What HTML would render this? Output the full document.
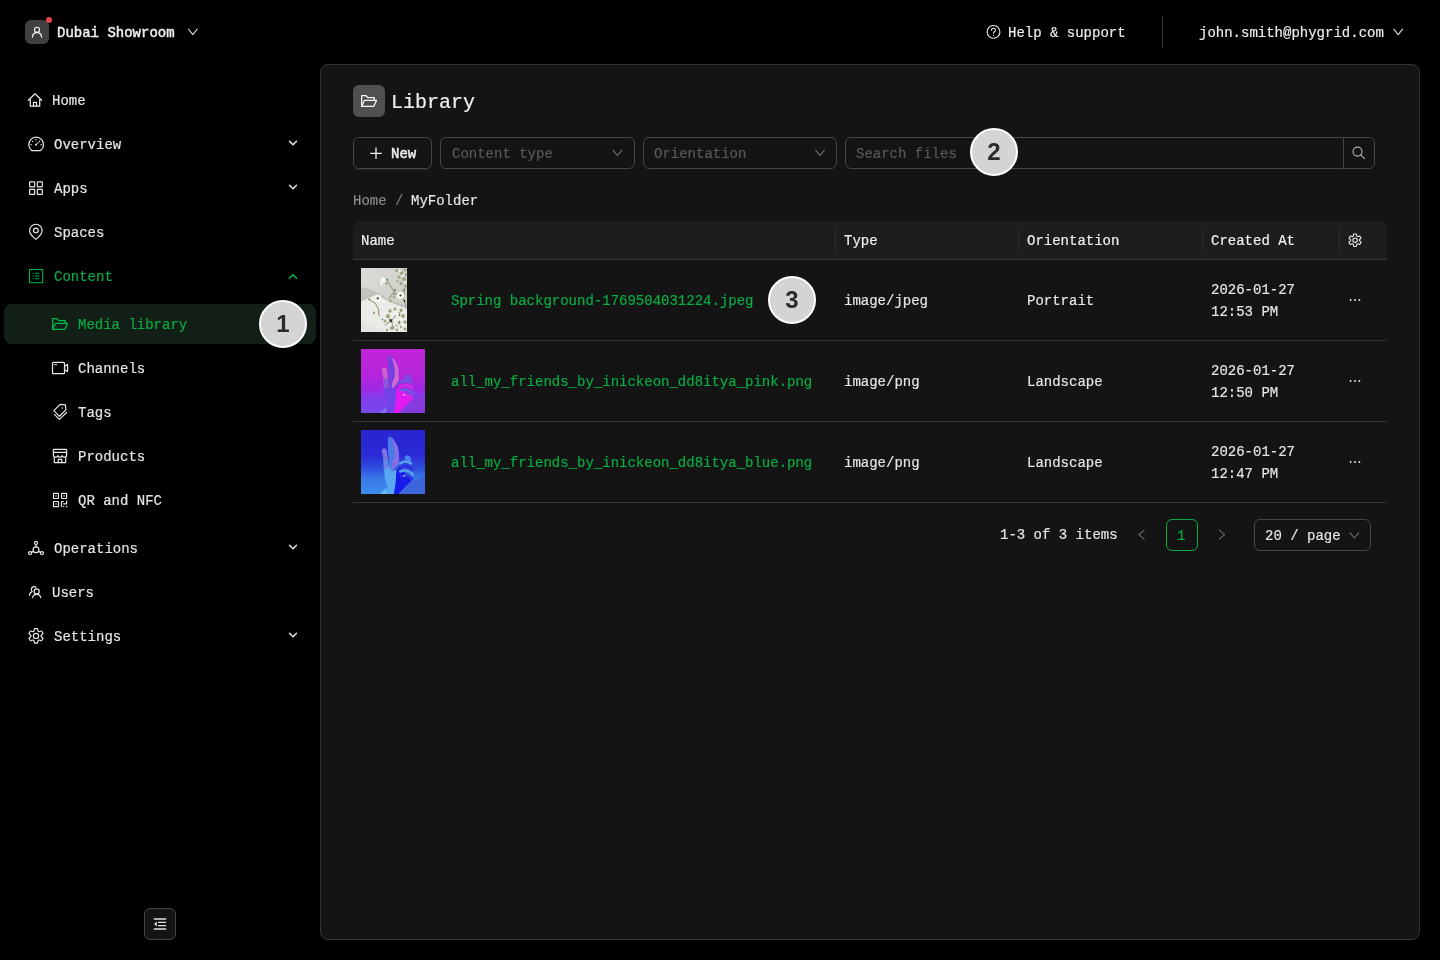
<!DOCTYPE html>
<html lang="en">
<head>
<meta charset="utf-8">
<title>Library</title>
<style>
*{box-sizing:border-box;margin:0;padding:0}
html,body{width:1440px;height:960px;overflow:hidden;background:#000}
body{position:relative;font-family:"Liberation Mono","DejaVu Sans Mono",monospace;font-size:14px;color:#e6e6e6;line-height:22px}
#root{position:absolute;left:0;top:0;width:1440px;height:960px;will-change:transform}
.abs{position:absolute}
.t.med{-webkit-text-stroke:0.45px currentColor}
svg{display:block;overflow:visible}
.t{position:absolute;white-space:nowrap;height:24px;line-height:24px;-webkit-text-stroke:0.18px currentColor}
/* header */
#org-av{left:25px;top:20px;width:24px;height:24px;border-radius:6px;background:#404040}
#org-dot{left:46.2px;top:16.9px;width:6.2px;height:6.2px;border-radius:50%;background:#e5484d}
/* sidebar */
.mi{position:absolute;left:4px;width:312px;height:40px}
.mi .ic{position:absolute;left:24px;top:12px;width:16px;height:16px;color:#e6e6e6}
.mi .lb{position:absolute;top:9px;height:24px;line-height:24px;white-space:nowrap;-webkit-text-stroke:0.18px currentColor}
.mi .ch{position:absolute;left:284px;top:15px;width:10px;height:10px}
.mi.sub .ic{left:48px}
.mi.sub .lb{left:74px}
.mi.sel{background:#111f17;border-radius:8px;color:#08ad43}
.mi.green{color:#08ad43}
.mi.green .ic,.mi.sel .ic{color:#08ad43}
/* main */
#panel{left:320px;top:64px;width:1100px;height:876px;background:#141414;border:1px solid #343434;border-radius:8px}
.badge{position:absolute;width:48px;height:48px;line-height:44px;font-size:24px;border-radius:50%;background:#d4d4d4;border:2px solid #fff;color:#2b2b2b;font-family:"Liberation Sans",sans-serif;font-weight:bold;text-align:center}
.inp{position:absolute;height:32px;top:137px;border:1px solid #464646;border-radius:6px;background:#141414}
.ph{color:#5a5a5a}
.hdr{position:absolute;left:353px;top:221px;width:1034px;height:39px;background:#1d1d1d;border-radius:8px 8px 0 0;border-bottom:1px solid #363636}
.sep{position:absolute;top:229px;width:1px;height:22px;background:#2e2e2e}
.row{position:absolute;left:353px;width:1034px;height:81px;border-bottom:1px solid #363636}
.g{color:#08ad43}
</style>
</head>
<body>
<div id="root">
<!-- HEADER -->
<div class="abs" id="org-av"></div>
<div class="abs" id="org-dot"></div>
<div class="t med" style="left:57px;top:21px;color:#f0f0f0">Dubai Showroom</div>
<div class="t" style="left:1008px;top:21px;color:#ededed">Help &amp; support</div>
<div class="abs" style="left:1162px;top:16px;width:1px;height:32px;background:#353535"></div>
<div class="t" style="left:1199px;top:21px;color:#ededed">john.smith@phygrid.com</div>

<!-- SIDEBAR -->
<div class="mi" style="top:80px"><div class="lb" style="left:48px">Home</div></div>
<div class="mi" style="top:124px"><div class="lb" style="left:50px">Overview</div></div>
<div class="mi" style="top:168px"><div class="lb" style="left:50px">Apps</div></div>
<div class="mi" style="top:212px"><div class="lb" style="left:50px">Spaces</div></div>
<div class="mi green" style="top:256px"><div class="lb" style="left:50px">Content</div></div>
<div class="mi sub sel" style="top:304px"><div class="lb">Media library</div></div>
<div class="mi sub" style="top:348px"><div class="lb">Channels</div></div>
<div class="mi sub" style="top:392px"><div class="lb">Tags</div></div>
<div class="mi sub" style="top:436px"><div class="lb">Products</div></div>
<div class="mi sub" style="top:480px"><div class="lb">QR and NFC</div></div>
<div class="mi" style="top:528px"><div class="lb" style="left:50px">Operations</div></div>
<div class="mi" style="top:572px"><div class="lb" style="left:48px">Users</div></div>
<div class="mi" style="top:616px"><div class="lb" style="left:50px">Settings</div></div>

<!-- MAIN PANEL -->
<div class="abs" id="panel"></div>
<div class="abs" style="left:353px;top:85px;width:32px;height:32px;border-radius:6px;background:#505050"></div>
<div class="t" style="left:391px;top:89px;font-size:20px;height:28px;line-height:28px;color:#f0f0f0">Library</div>

<div class="inp" style="left:353px;width:79px;box-shadow:0 2px 0 rgba(255,255,255,.04)"></div>
<div class="t med" style="left:391px;top:142px;color:#f0f0f0">New</div>
<div class="inp" style="left:440px;width:194.5px"></div>
<div class="t ph" style="left:452px;top:142px">Content type</div>
<div class="inp" style="left:642.5px;width:194.5px"></div>
<div class="t ph" style="left:654px;top:142px">Orientation</div>
<div class="inp" style="left:845px;width:499px;border-radius:6px 0 0 6px"></div>
<div class="inp" style="left:1343px;width:32px;border-radius:0 6px 6px 0"></div>
<div class="t ph" style="left:856px;top:142px">Search files</div>

<div class="t" style="left:353px;top:189px;color:#8c8c8c">Home</div>
<div class="t" style="left:395px;top:189px;color:#7a7a7a">/</div>
<div class="t" style="left:411px;top:189px;color:#e6e6e6">MyFolder</div>

<div class="hdr"></div>
<div class="t" style="left:361px;top:229px;color:#f0f0f0">Name</div>
<div class="t" style="left:844px;top:229px;color:#f0f0f0">Type</div>
<div class="t" style="left:1027px;top:229px;color:#f0f0f0">Orientation</div>
<div class="t" style="left:1211px;top:229px;color:#f0f0f0">Created At</div>
<div class="sep" style="left:835px"></div>
<div class="sep" style="left:1018px"></div>
<div class="sep" style="left:1202px"></div>
<div class="sep" style="left:1339px"></div>

<div class="row" style="top:260px"></div>
<div class="row" style="top:341px"></div>
<div class="row" style="top:422px"></div>

<div class="t g" style="left:451px;top:289px">Spring background-1769504031224.jpeg</div>
<div class="t g" style="left:451px;top:370px">all_my_friends_by_inickeon_dd8itya_pink.png</div>
<div class="t g" style="left:451px;top:451px">all_my_friends_by_inickeon_dd8itya_blue.png</div>

<div class="t" style="left:844px;top:289px">image/jpeg</div>
<div class="t" style="left:844px;top:370px">image/png</div>
<div class="t" style="left:844px;top:451px">image/png</div>
<div class="t" style="left:1027px;top:289px">Portrait</div>
<div class="t" style="left:1027px;top:370px">Landscape</div>
<div class="t" style="left:1027px;top:451px">Landscape</div>
<div class="t" style="left:1211px;top:278px">2026-01-27</div>
<div class="t" style="left:1211px;top:300px">12:53 PM</div>
<div class="t" style="left:1211px;top:359px">2026-01-27</div>
<div class="t" style="left:1211px;top:381px">12:50 PM</div>
<div class="t" style="left:1211px;top:440px">2026-01-27</div>
<div class="t" style="left:1211px;top:462px">12:47 PM</div>

<div class="t" style="left:1000px;top:523px">1-3 of 3 items</div>
<div class="abs" style="left:1165.5px;top:519px;width:32px;height:32px;border:1px solid #08ad43;border-radius:6px"></div>
<div class="t g" style="left:1177px;top:524px">1</div>
<div class="abs" style="left:1253.5px;top:519px;width:117.5px;height:32px;border:1px solid #464646;border-radius:6px"></div>
<div class="t" style="left:1265px;top:524px">20 / page</div>

<!-- collapse btn -->
<div class="abs" style="left:144px;top:908px;width:32px;height:32px;border:1px solid #464646;border-radius:6px;background:#141414"></div>


<!-- THUMBNAILS -->
<svg class="abs" style="left:361px;top:268px" width="46" height="64" viewBox="0 0 46 64">
  <defs><linearGradient id="t1g" x1="0" y1="0" x2="1" y2="1"><stop offset="0" stop-color="#dbdbd7"/><stop offset="1" stop-color="#c9cac5"/></linearGradient></defs>
  <rect width="46" height="64" fill="url(#t1g)"/>
  <path d="M0 19 Q16 22 28 32 L46 38 V44 L0 36 Z" fill="#c1c2bd"/>
  <path d="M0 33.5 L14.5 27 L30 34.5 L46 41 V64 H0 Z" fill="#ebebe8"/>
  <path d="M0 52 L26 64 H0 Z" fill="#e4e4e1"/>
  <g fill="#9a9e70" opacity=".9">
    <circle cx="35.5" cy="2.5" r="1.4"/><circle cx="40.5" cy="5" r="1.8"/><circle cx="44" cy="2" r="1.4"/><circle cx="38" cy="9" r="1.5"/><circle cx="43" cy="11" r="2"/><circle cx="40" cy="15.5" r="1.5"/><circle cx="44.5" cy="18" r="1.5"/><circle cx="36.5" cy="13" r="1.1"/><circle cx="45" cy="7" r="1.3"/><circle cx="42.5" cy="22" r="1.3"/>
    <circle cx="29" cy="43" r="1.7"/><circle cx="34" cy="41" r="1.4"/><circle cx="40" cy="42" r="1.5"/><circle cx="27" cy="48" r="1.9"/><circle cx="24" cy="53" r="1.5"/><circle cx="42" cy="48" r="1.9"/><circle cx="44" cy="54" r="1.7"/><circle cx="38" cy="55" r="1.5"/><circle cx="31" cy="60" r="2.1"/><circle cx="44" cy="61" r="1.5"/><circle cx="13" cy="45" r="1.2"/><circle cx="26" cy="62" r="1.2"/><circle cx="36" cy="62" r="1.4"/><circle cx="40" cy="59" r="1.2"/><circle cx="29.5" cy="33" r="1.2"/><circle cx="33" cy="29" r="1.2"/>
  </g>
  <g stroke="#80845a" stroke-width=".9" fill="none" stroke-linecap="round">
    <path d="M26 12 L30 19 L34 25 L37 27"/><path d="M8 31.5 L14 35 L17.5 41 L18 48"/><path d="M30 53 L35 47 L41 43 M30 53 L26 48 M30 53 L36 58 M30 53 L24 57 M30 53 L33 60"/><path d="M44 20 L42 30 L45 38"/><path d="M33 24 L30 28 L28 31"/>
  </g>
  <g fill="#f5f5f1">
    <circle cx="39.5" cy="27.5" r="3.6"/><circle cx="16.7" cy="30.2" r="3.6"/><circle cx="22" cy="12" r="2.6"/><circle cx="20.5" cy="15.5" r="1.6"/><circle cx="42" cy="8" r="1.3"/><circle cx="39" cy="3" r="1.1"/><circle cx="36" cy="46" r="1.6"/><circle cx="40" cy="51" r="1.5"/><circle cx="22" cy="33" r="1.6"/><circle cx="44" cy="14" r="1.1"/><circle cx="33" cy="56" r="1.3"/><circle cx="42" cy="57" r="1.2"/>
  </g>
  <g fill="#33351f"><circle cx="39.5" cy="27.5" r="1.1"/><circle cx="16.7" cy="30.3" r="1.1"/><circle cx="29.8" cy="52.6" r="1.5"/><circle cx="38.5" cy="47" r=".8"/><circle cx="34" cy="22" r=".8"/><circle cx="43.5" cy="33" r=".9"/></g>
  <g fill="#1f6b4a"><circle cx="26.2" cy="11.6" r=".8"/><circle cx="25.5" cy="15.5" r=".7"/><circle cx="8.2" cy="31.3" r=".8"/><circle cx="33.4" cy="26.6" r=".7"/><circle cx="21.5" cy="51.5" r=".7"/><circle cx="38.5" cy="53.5" r=".7"/></g>
</svg>
<svg class="abs" style="left:361px;top:349px" width="64" height="64" viewBox="0 0 64 64">
  <defs><linearGradient id="hg2" x1="0" y1="0" x2="0" y2="1"><stop offset="0" stop-color="#c024d6"/><stop offset=".4" stop-color="#b625da"/><stop offset=".62" stop-color="#a028e2"/><stop offset=".76" stop-color="#823eec"/><stop offset="1" stop-color="#7848ea"/></linearGradient></defs>
  <rect width="64" height="64" fill="url(#hg2)"/>
  <path d="M38 64 L50.6 50.8 L64 47 V64 Z" fill="#8a3adc" opacity=".85"/>
  <path d="M18.5 64 L25 58.5 L26.5 64 Z" fill="#7c78f2"/>
  <path d="M25 64 L26.25 57.5 L23.75 47.5 L22.9 37.5 L27.5 35 L31 40 L35.6 40.2 L34.8 52.5 L33 64 Z" fill="#7242ea"/>
  <path d="M35.5 40.8 L39 37.5 L50.6 50.8 L47 54 L37.6 64 L32.9 64 L34.7 52.5 Z" fill="#e418f0"/>
  <path d="M20.8 21 Q20.8 18.2 23.3 18.2 Q25.8 18.4 25.9 21 L27 31 L27.6 38 L22.9 39.5 L22.4 29 Z" fill="#cc62cc"/>
  <path d="M22.4 29 L27 29.6 L27.6 38 L22.9 39.5 Z" fill="#8a58d8"/>
  <path d="M26.7 10 Q27 6.4 29.3 6.7 Q31.5 7 33.5 11 L36.3 15.8 L37.8 21.7 L38.3 30 L37.5 35 L31 42 L28 36 L27 19 Z" fill="#7440e2"/>
  <path d="M30 8 L33.5 11 L36.3 15.8 L37.6 21 L37.9 30 L37 33 L32 39.5 L30.6 37.5 L31.5 33 L33.8 27.5 L33.8 19 L31.3 10.8 Z" fill="#d268d2"/>
  <g fill="none" stroke-linecap="round" stroke-width="2.5">
    <path d="M39 33.5 Q45 29.5 50 33.5" stroke="#6e58e6"/>
    <path d="M39 37.5 Q46 34 51.5 39.5" stroke="#d42ae2"/>
    <path d="M39 41.5 Q46 38.5 52 44.5" stroke="#6e58e6"/>
    <path d="M40 46 Q46 44 51 49" stroke="#d42ae2"/>
  </g>
  <path d="M43.5 27 Q45.5 23.8 48.8 26.2 Q50.5 28 50 32 L44 29.5 Z" fill="#7a4ee6"/>
  <circle cx="43.3" cy="45.8" r=".9" fill="#d8d0f0"/>
</svg>

<svg class="abs" style="left:361px;top:430px" width="64" height="64" viewBox="0 0 64 64">
  <defs><linearGradient id="hg3" x1="0" y1="0" x2="0" y2="1"><stop offset="0" stop-color="#2a24d2"/><stop offset=".4" stop-color="#2a2ad6"/><stop offset=".6" stop-color="#2f50de"/><stop offset=".76" stop-color="#3a78e8"/><stop offset="1" stop-color="#3c8eec"/></linearGradient></defs>
  <rect width="64" height="64" fill="url(#hg3)"/>
  <path d="M38 64 L50.6 50.8 L64 47 V64 Z" fill="#3c62d8" opacity=".9"/>
  <path d="M18.5 64 L25 58.5 L26.5 64 Z" fill="#62c0f6"/>
  <path d="M25 64 L26.25 57.5 L23.75 47.5 L22.9 37.5 L27.5 35 L31 40 L35.6 40.2 L34.8 52.5 L33 64 Z" fill="#5aa8f0"/>
  <path d="M35.5 40.8 L39 37.5 L50.6 50.8 L47 54 L37.6 64 L32.9 64 L34.7 52.5 Z" fill="#1a1ae8"/>
  <path d="M20.8 21 Q20.8 18.2 23.3 18.2 Q25.8 18.4 25.9 21 L27 31 L27.6 38 L22.9 39.5 L22.4 29 Z" fill="#7e72e0"/>
  <path d="M22.4 29 L27 29.6 L27.6 38 L22.9 39.5 Z" fill="#6488e2"/>
  <path d="M26.7 10 Q27 6.4 29.3 6.7 Q31.5 7 33.5 11 L36.3 15.8 L37.8 21.7 L38.3 30 L37.5 35 L31 42 L28 36 L27 19 Z" fill="#4a7ae8"/>
  <path d="M30 8 L33.5 11 L36.3 15.8 L37.6 21 L37.9 30 L37 33 L32 39.5 L30.6 37.5 L31.5 33 L33.8 27.5 L33.8 19 L31.3 10.8 Z" fill="#8c6ce2"/>
  <g fill="none" stroke-linecap="round" stroke-width="2.5">
    <path d="M39 33.5 Q45 29.5 50 33.5" stroke="#5aa2f0"/>
    <path d="M39 37.5 Q46 34 51.5 39.5" stroke="#2a30e0"/>
    <path d="M39 41.5 Q46 38.5 52 44.5" stroke="#5aa2f0"/>
    <path d="M40 46 Q46 44 51 49" stroke="#2a30e0"/>
  </g>
  <path d="M43.5 27 Q45.5 23.8 48.8 26.2 Q50.5 28 50 32 L44 29.5 Z" fill="#4a86ea"/>
  <circle cx="43.3" cy="45.8" r=".9" fill="#d8d0f0"/>
</svg>

<!-- ICON OVERLAY (page coordinates) -->
<svg class="abs" id="icons" style="left:0;top:0;pointer-events:none" width="1440" height="960" viewBox="0 0 1440 960" fill="none" stroke="#e8e8e8" stroke-width="1.25" stroke-linecap="round" stroke-linejoin="round">
  <!-- org avatar user -->
  <g stroke="#f2f2f2" stroke-width="1.2">
    <circle cx="37" cy="29.8" r="2.55"/>
    <path d="M32.4 37.1 C32.6 34.2 34.6 32.6 37 32.6 C39.4 32.6 41.4 34.2 41.6 37.1"/>
  </g>
  <!-- header chevrons -->
  <path d="M188.5 29.2 L192.85 34.7 L197.2 29.2" stroke-width="1.05" stroke="#dcdcdc"/>
  <path d="M1393.8 29.2 L1398.15 34.7 L1402.5 29.2" stroke-width="1.05" stroke="#dcdcdc"/>
  <!-- help -->
  <g stroke-width="1.1">
    <circle cx="993.5" cy="31.9" r="6.4"/>
    <path d="M991.5 30.3 C991.5 28.9 992.4 28.2 993.5 28.2 C994.7 28.2 995.5 29 995.5 30 C995.5 31.6 993.5 31.4 993.5 33.3"/>
    <circle cx="993.5" cy="35.4" r=".55" fill="#e8e8e8" stroke="none"/>
  </g>

  <!-- Home -->
  <path d="M28.4 100.3 L35 93.8 L41.6 100.3"/>
  <path d="M30.3 99.6 V106.2 H39.7 V99.6"/>
  <path d="M33.5 106.2 V102.4 H36.5 V106.2"/>
  <!-- Overview (dashboard) -->
  <path d="M31.7 150.5 A7.4 7.4 0 1 1 40.6 150.5 Z"/>
  <path d="M36.1 144.8 L38.4 142.2" stroke-width="1"/>
  <circle cx="36.1" cy="144.85" r="1" fill="#e8e8e8" stroke="none"/>
  <g fill="#e8e8e8" stroke="none"><circle cx="31.1" cy="144.8" r=".7"/><circle cx="32.5" cy="141.4" r=".7"/><circle cx="35.9" cy="139.8" r=".7"/><circle cx="39.6" cy="141.2" r=".7"/><circle cx="41.1" cy="144.8" r=".7"/></g>
  <!-- Apps -->
  <g stroke-width="1.2"><rect x="29.6" y="181.9" width="5" height="5" rx=".5"/><rect x="37.3" y="181.9" width="5" height="5" rx=".5"/><rect x="29.6" y="189.4" width="5" height="5" rx=".5"/><rect x="37.3" y="189.4" width="5" height="5" rx=".5"/></g>
  <!-- Spaces (pin) -->
  <path d="M35.85 239.2 C35.85 239.2 29.6 234.7 29.6 230.5 A6.25 6.25 0 0 1 42.1 230.5 C42.1 234.7 35.85 239.2 35.85 239.2 Z" stroke-width="1.2"/>
  <circle cx="35.85" cy="230.4" r="2.35" stroke-width="1.2"/>
  <!-- Content -->
  <g stroke="#00b84a" stroke-width="1.1" stroke-linecap="butt">
    <rect x="29.5" y="269.5" width="13.2" height="13.2" rx=".3"/>
    <path d="M32.6 273.2 H33.7 M35 273.2 H39.3 M32.6 276 H33.7 M35 276 H39.3 M32.6 278.7 H33.7 M35 278.7 H39.3"/>
  </g>
  <path d="M289.5 278.3 L293 274.8 L296.5 278.3" stroke="#00b84a" stroke-width="1.5"/>
  <!-- Media library folder -->
  <g stroke="#00b84a" stroke-width="1.3">
    <path d="M52.7 329.3 V318.7 H57 L59 320.7 H65.3 V323.4"/>
    <path d="M52.7 329.3 L55.4 323.4 H67.5 L64.8 329.3 Z"/>
  </g>
  <!-- Channels -->
  <rect x="52.5" y="362.3" width="12" height="11.4" rx="1"/>
  <path d="M64.8 366.2 L67.6 364.4 V371.6 L64.8 369.8" />
  <path d="M54.6 364.7 H56.6" stroke-width="1"/>
  <!-- Tags -->
  <path d="M60 404.4 L65.4 404.8 L65.9 409.9 L59.4 416.3 L53.9 410.6 Z" stroke-width="1.2"/>
  <path d="M54.6 414.6 L59.4 419.4 L66.6 412.5" stroke-width="1.2"/>
  <rect x="61.6" y="407.4" width="1.3" height="1.3" fill="#e8e8e8" stroke="none"/>
  <!-- Products (shop) -->
  <g stroke-width="1.2">
    <path d="M54.2 449.3 H65.8 Q66.6 449.3 66.6 450.1 V452.4 H53.4 V450.1 Q53.4 449.3 54.2 449.3 Z"/>
    <path d="M53.4 452.4 V455 Q53.4 457.2 55.6 457.2 Q57.8 457.2 57.8 455.6 Q57.8 457.2 60 457.2 Q62.2 457.2 62.2 455.6 Q62.2 457.2 64.4 457.2 Q66.6 457.2 66.6 455 V452.4"/>
    <path d="M54.3 457.4 V462.6 H65.7 V457.4"/>
    <path d="M58.3 462.6 V459.4 H61.7 V462.6"/>
  </g>
  <!-- QR -->
  <g stroke-width="1.2">
    <rect x="53.5" y="493.3" width="5" height="5.2" rx=".4"/>
    <rect x="61.6" y="493.3" width="5" height="5.2" rx=".4"/>
    <rect x="53.5" y="501.5" width="5" height="5.1" rx=".4"/>
    <path d="M61.5 506.6 V501.5 H63.2 M66.6 501.2 V503.8 H63.6"/>
  </g>
  <g fill="#e8e8e8" stroke="none"><rect x="55.4" y="495.3" width="1.3" height="1.3"/><rect x="63.5" y="495.3" width="1.3" height="1.3"/><rect x="55.4" y="503.3" width="1.3" height="1.3"/><rect x="63" y="505.9" width="1.3" height="1.3"/><rect x="66" y="505.9" width="1.3" height="1.3"/></g>
  <!-- Operations -->
  <g stroke-width="1.2">
    <circle cx="36" cy="549.8" r="2.9"/>
    <circle cx="36" cy="542.9" r="1.55"/>
    <circle cx="30.1" cy="553.1" r="1.55"/>
    <circle cx="41.9" cy="553.1" r="1.55"/>
    <path d="M36 544.5 V546.9 M33.5 551.3 L31.5 552.4 M38.5 551.3 L40.5 552.4"/>
  </g>
  <!-- Users -->
  <g stroke-width="1.2">
    <circle cx="36.7" cy="591.4" r="2.55"/>
    <path d="M32.5 597.6 C32.9 595.4 34.6 594.3 36.7 594.3 C38.8 594.3 40.4 595.4 40.8 597.6"/>
    <path d="M36 587.4 A2.7 2.7 0 1 0 32.2 591.4 C30.6 592.2 29.6 593.5 29.4 595.3"/>
  </g>
  <!-- Settings -->
  <path d="M33.92 631.24 L34.53 628.65 L37.47 628.65 L38.08 631.24 L38.99 631.77 L41.55 631.00 L43.02 633.55 L41.07 635.37 L41.07 636.43 L43.02 638.25 L41.55 640.80 L38.99 640.03 L38.08 640.56 L37.47 643.15 L34.53 643.15 L33.92 640.56 L33.01 640.03 L30.45 640.80 L28.98 638.25 L30.93 636.43 L30.93 635.37 L28.98 633.55 L30.45 631.00 L33.01 631.77 Z" stroke-width="1.2"/>
  <circle cx="36" cy="635.9" r="2.6" stroke-width="1.2"/>
  <!-- expand chevrons -->
  <g stroke-width="1.5">
    <path d="M289.5 141.3 L293 144.8 L296.5 141.3"/>
    <path d="M289.5 185.3 L293 188.8 L296.5 185.3"/>
    <path d="M289.5 545.3 L293 548.8 L296.5 545.3"/>
    <path d="M289.5 633.3 L293 636.8 L296.5 633.3"/>
  </g>

  <!-- Library title folder -->
  <g stroke="#f5f5f5" stroke-width="1.3" transform="translate(309,-223)">
    <path d="M52.7 329.3 V318.7 H57 L59 320.7 H65.3 V323.4"/>
    <path d="M52.7 329.3 L55.4 323.4 H67.5 L64.8 329.3 Z"/>
  </g>
  <!-- plus -->
  <path d="M376 147.6 V159 M370.3 153.3 H381.7" stroke="#ededed" stroke-width="1.3" stroke-linecap="butt"/>
  <!-- select arrows -->
  <g stroke="#6e6e6e" stroke-width="1.05">
    <path d="M613.1 150.1 L617.5 155.6 L621.9 150.1"/>
    <path d="M815.6 150.1 L820 155.6 L824.4 150.1"/>
    <path d="M1350.1 532.8 L1354.4 538 L1358.7 532.8"/>
    <path d="M1144.2 530.2 L1138.9 534.7 L1144.2 539.2"/>
    <path d="M1219.3 530.2 L1224.6 534.7 L1219.3 539.2"/>
  </g>
  <!-- search -->
  <g stroke="#b4b4b4" stroke-width="1.1">
    <circle cx="1357.5" cy="151.6" r="4.5"/>
    <path d="M1360.8 154.9 L1364.5 158.6"/>
  </g>
  <!-- header gear -->
  <path d="M1353.21 236.18 L1353.73 233.93 L1356.27 233.93 L1356.79 236.18 L1357.58 236.64 L1359.80 235.96 L1361.07 238.16 L1359.38 239.74 L1359.38 240.66 L1361.07 242.24 L1359.80 244.44 L1357.58 243.76 L1356.79 244.22 L1356.27 246.47 L1353.73 246.47 L1353.21 244.22 L1352.42 243.76 L1350.20 244.44 L1348.93 242.24 L1350.62 240.66 L1350.62 239.74 L1348.93 238.16 L1350.20 235.96 L1352.42 236.64 Z" stroke-width="1.1"/>
  <circle cx="1355" cy="240.2" r="2.2" stroke-width="1.1"/>
  <!-- ellipsis -->
  <g fill="#f2f2f2" stroke="none">
    <circle cx="1350.6" cy="300" r=".9"/><circle cx="1355" cy="300" r=".9"/><circle cx="1359.4" cy="300" r=".9"/>
    <circle cx="1350.6" cy="381" r=".9"/><circle cx="1355" cy="381" r=".9"/><circle cx="1359.4" cy="381" r=".9"/>
    <circle cx="1350.6" cy="462" r=".9"/><circle cx="1355" cy="462" r=".9"/><circle cx="1359.4" cy="462" r=".9"/>
  </g>
  <!-- collapse icon -->
  <g stroke="#e0e0e0" stroke-width="1.3" stroke-linecap="butt">
    <path d="M153.8 919 H166.2 M158 922.4 H166.2 M158 925.6 H166.2 M153.8 929 H166.2"/>
  </g>
  <path d="M154 924 L156.8 921.6 V926.4 Z" fill="#e0e0e0" stroke="none"/>
</svg>

<!-- BADGES -->
<div class="badge" style="left:259px;top:300px">1</div>
<div class="badge" style="left:970px;top:128px">2</div>
<div class="badge" style="left:768px;top:276px">3</div>
</div>
</body>
</html>
